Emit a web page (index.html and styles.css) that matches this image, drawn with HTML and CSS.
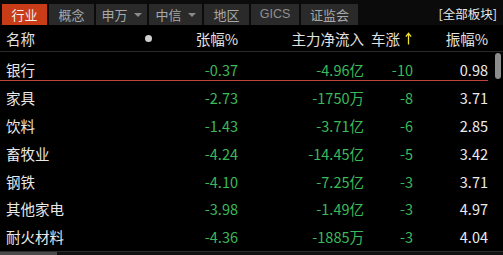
FILE: index.html
```html
<!DOCTYPE html>
<html>
<head>
<meta charset="utf-8">
<link rel="stylesheet" href="styles.css">
</head>
<body>
<div class="panel">
  <div class="tabs">
    <div class="tab active w45">行业</div>
    <div class="tab w45">概念</div>
    <div class="tab w51 dd">申万<span class="tri"></span></div>
    <div class="tab w53 dd">中信<span class="tri"></span></div>
    <div class="tab w45">地区</div>
    <div class="tab w50 latin">GICS</div>
    <div class="tab w57">证监会</div>
    <div class="spacer"></div>
    <div class="all">[全部板块]</div>
  </div>
  <div class="grid head">
    <div class="c name">名称</div>
    <div class="c pct"><span class="dot"></span><span>张幅%</span></div>
    <div class="c flow">主力净流入</div>
    <div class="c cnt"><span>车涨</span><svg class="up" width="7" height="13" viewBox="0 0 7 13"><path d="M3.5 1.5V12.5M0.8 4.6L3.5 1.3L6.2 4.6" fill="none" stroke="#f0e030" stroke-width="1.3"/></svg></div>
    <div class="c amp">振幅%</div>
  </div>
  <div class="rows">
    <div class="grid row sel"><div class="c name">银行</div><div class="c g">-0.37</div><div class="c g">-4.96亿</div><div class="c g">-10</div><div class="c w">0.98</div></div>
    <div class="grid row"><div class="c name">家具</div><div class="c g">-2.73</div><div class="c g">-1750万</div><div class="c g">-8</div><div class="c w">3.71</div></div>
    <div class="grid row"><div class="c name">饮料</div><div class="c g">-1.43</div><div class="c g">-3.71亿</div><div class="c g">-6</div><div class="c w">2.85</div></div>
    <div class="grid row"><div class="c name">畜牧业</div><div class="c g">-4.24</div><div class="c g">-14.45亿</div><div class="c g">-5</div><div class="c w">3.42</div></div>
    <div class="grid row"><div class="c name">钢铁</div><div class="c g">-4.10</div><div class="c g">-7.25亿</div><div class="c g">-3</div><div class="c w">3.71</div></div>
    <div class="grid row"><div class="c name">其他家电</div><div class="c g">-3.98</div><div class="c g">-1.49亿</div><div class="c g">-3</div><div class="c w">4.97</div></div>
    <div class="grid row"><div class="c name">耐火材料</div><div class="c g">-4.36</div><div class="c g">-1885万</div><div class="c g">-3</div><div class="c w">4.04</div></div>
    <div class="vthumb"></div>
  </div>
  <div class="hbar"><div class="hthumb"></div></div>
</div>
</body>
</html>
```
FILE: styles.css
```css
html, body {
  margin: 0;
  padding: 0;
  background: #000;
}
body {
  width: 503px;
  height: 255px;
  overflow: hidden;
  font-family: "Noto Sans CJK SC", "Noto Sans", sans-serif;
  color: #e6e6e6;
}
.panel {
  display: flex;
  flex-direction: column;
  height: 255px;
}
.tabs {
  display: flex;
  gap: 2px;
  height: 25px;
  box-sizing: border-box;
  padding: 4px 0 0 2px;
  background: #0b0b0b;
}
.tab {
  height: 21px;
  display: flex;
  align-items: center;
  justify-content: center;
  gap: 6px;
  background: #2a2a2a;
  color: #a8a8a8;
  font-size: 13px;
  line-height: 1;
}
.tab.latin {
  font-family: "Liberation Sans", Arial, sans-serif;
  font-size: 12.5px;
  color: #8f8f8f;
}
.tab.active {
  background: #c83c17;
  color: #f2f2f2;
}
.w45 { width: 45px; }
.w50 { width: 48px; }
.w51 { width: 51px; }
.w53 { width: 53px; }
.w57 { width: 57px; }
.tri {
  width: 0;
  height: 0;
  border-left: 4px solid transparent;
  border-right: 4px solid transparent;
  border-top: 4px solid #8a8a8a;
}
.spacer { flex: 1; }
.all {
  align-self: center;
  font-size: 12.5px;
  color: #e8e8e8;
  padding-right: 6px;
  margin-top: -2px;
}
.grid {
  display: grid;
  grid-template-columns: 132px 106px 126px 49px 75px;
  align-items: center;
}
.head {
  height: 26px;
  border-bottom: 1px solid #2a2a2a;
  font-size: 14.5px;
  color: #e2e2e2;
}
.c { text-align: right; white-space: nowrap; }
.c.name { text-align: left; padding-left: 6px; }
.pct {
  display: flex;
  justify-content: space-between;
  align-items: center;
  padding-left: 13px;
}
.dot {
  width: 7px;
  height: 7px;
  border-radius: 50%;
  background: #cfcfcf;
}
.cnt {
  display: flex;
  justify-content: flex-end;
  align-items: center;
  gap: 5px;
  padding-right: 1px;
}
.up {
  display: block;
  flex: none;
}
.rows {
  position: relative;
  flex: 1;
  padding-top: 4px;
}
.row {
  height: 27.8px;
  font-size: 14.5px;
  position: relative;
}
.row .name { color: #e8e8e8; }
.g { color: #3cb95a; }
.w { color: #ececec; }
.row.sel::after {
  content: "";
  position: absolute;
  left: 0;
  width: 488px;
  bottom: 3px;
  height: 1px;
  background: #c0453b;
}
.vthumb {
  position: absolute;
  right: 2px;
  top: 1px;
  width: 6px;
  height: 26px;
  border-radius: 3px;
  background: #8c8c8c;
}
.hbar {
  height: 3px;
  border-top: 1px solid #2c2c2c;
  background: #111;
  display: flex;
}
.hthumb {
  width: 57px;
  background: #4a4a4a;
}
```
